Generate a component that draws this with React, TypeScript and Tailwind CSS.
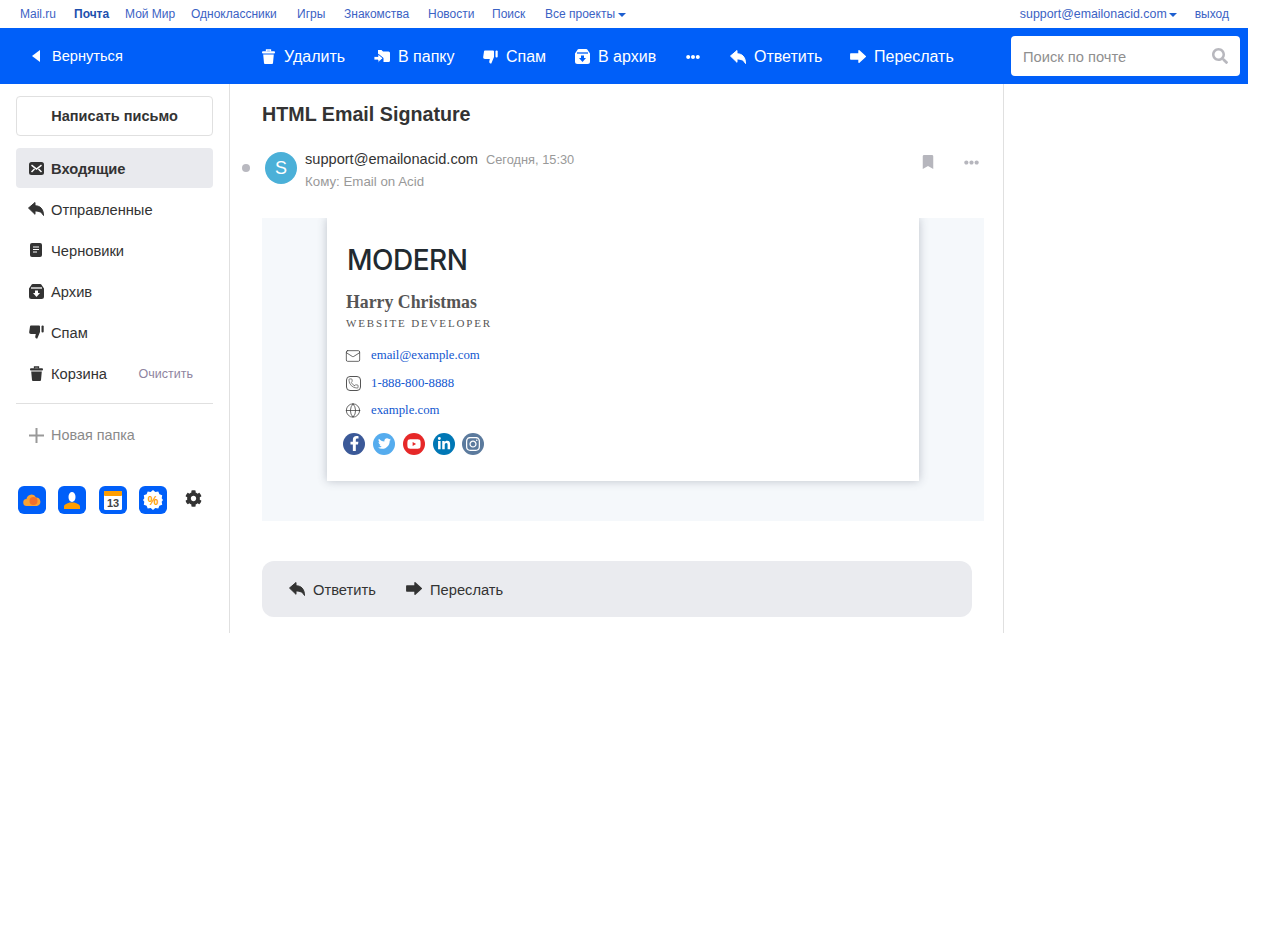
import React from "react";
import {
  FaBookmark,
  FaCog,
  FaEllipsisH,
  FaFacebookF,
  FaInstagram,
  FaLinkedinIn,
  FaSearch,
  FaTwitter,
  FaYoutube,
} from "react-icons/fa";
import { Globe, Mail, Phone } from "lucide-react";

const sans = "font-['Liberation_Sans',Arial,sans-serif]";
const serif = "font-['Liberation_Serif','Times_New_Roman',serif]";

function InboxIcon() {
  return (
    <svg width="15" height="13" viewBox="0 0 15 13">
      <rect width="15" height="13" rx="2.500" fill="#333" />
      <path d="M2.500 3.200 7.500 7 12.500 3.200M2.500 10 5.500 7M12.500 10 9.500 7" stroke="#fff" strokeWidth="1.500" fill="none" />
    </svg>
  );
}

function DraftIcon() {
  return (
    <svg width="12" height="14" viewBox="0 0 12 14">
      <rect width="12" height="14" rx="2" fill="#333" />
      <path d="M3 4h6M3 6.500h6M3 9h4" stroke="#fff" strokeWidth="1" />
    </svg>
  );
}

function ArchiveIcon({ color, hole }: { color: string; hole: string }) {
  return (
    <svg width="15" height="15" viewBox="0 0 15 15">
      <path d="M4 0h7a2 2 0 0 1 1.800 1.200L15 4.500v8A2.500 2.500 0 0 1 12.500 15h-10A2.500 2.500 0 0 1 0 12.500v-8l2.200-3.300A2 2 0 0 1 4 0z" fill={color} />
      <path d="M2 4h11" stroke={hole} strokeWidth="1.300" />
      <path d="M6 6.500h3v2.500h2l-3.500 4L4 9h2z" fill={hole} />
    </svg>
  );
}

function MoveIcon() {
  return (
    <svg width="16" height="14" viewBox="0 0 16 14">
      <path d="M4 0h3.500l1.500 1.500h5.500A1.500 1.500 0 0 1 16 3v7.500a1.500 1.500 0 0 1-1.500 1.500H9.500V8L5 4.500H4z" fill="#fff" />
      <path d="M0 6.500h4V4l5 4.200-5 4.300V10H0z" fill="#fff" stroke="#005ff9" strokeWidth="0.800" />
    </svg>
  );
}

function PlusIcon() {
  return (
    <svg width="15" height="15" viewBox="0 0 15 15">
      <path d="M7.500 0v15M0 7.500h15" stroke="#999" strokeWidth="2" />
    </svg>
  );
}

function TrashIcon({ color }: { color: string }) {
  return (
    <svg width="13" height="15" viewBox="0 0 13 15">
      <path d="M4.500 2.500V1h4v1.500" fill="none" stroke={color} strokeWidth="1.300" />
      <rect y="2.300" width="13" height="2.200" rx="1" fill={color} />
      <path d="M1.200 5.500h10.600l-.8 8.500a1 1 0 0 1-1 1H3a1 1 0 0 1-1-1z" fill={color} />
    </svg>
  );
}

function ReplyIcon({ color }: { color: string }) {
  return (
    <svg width="16" height="14" viewBox="0 0 16 14">
      <path
        d="M.5 6 7 .500v3.200c5 .1 8.500 3 8.500 9.800-1.500-3.300-4-4.500-8.500-4.600v3.400z"
        fill={color}
        stroke={color}
        strokeWidth="1"
        strokeLinejoin="round"
      />
    </svg>
  );
}

function ForwardIcon({ color }: { color: string }) {
  return (
    <svg width="16" height="13" viewBox="0 0 16 13">
      <path
        d="M15.300 6.500 9 .800v3.200H.8v5h8.200v3.200z"
        fill={color}
        stroke={color}
        strokeWidth="1.400"
        strokeLinejoin="round"
      />
    </svg>
  );
}

function SpamIcon({ color }: { color: string }) {
  return (
    <svg width="15" height="14" viewBox="0 0 15 14">
      <path d="M2 .5h8a1 1 0 0 1 1 1V7L8.300 13.500c-1.400 0-2.300-.9-2-2.300L6.800 9H2C.8 9 0 8.200.2 7L1 1.500A1 1 0 0 1 2 .5z" fill={color} />
      <rect x="12.500" y="0.500" width="2.200" height="7" rx="1" fill={color} />
    </svg>
  );
}

function TopBar() {
  const links = [
    { name: "Mail.ru", width: "w-[54px]" },
    { name: "Почта", width: "w-[51px]" },
    { name: "Мой Мир", width: "w-[66px]" },
    { name: "Одноклассники", width: "w-[106px]" },
    { name: "Игры", width: "w-[47px]" },
    { name: "Знакомства", width: "w-[84px]" },
    { name: "Новости", width: "w-[64px]" },
    { name: "Поиск", width: "w-[53px]" },
  ];
  return (
    <div className="flex h-7 w-[1248px] items-center pl-5 pr-[19px] text-xs text-[#3b62c4]">
      {links.map((link) => (
        <span key={link.name} className={`${link.width} ${link.name === "Почта" ? "font-bold text-[#1d4fae]" : ""}`}>
          {link.name}
        </span>
      ))}
      <span className="flex items-center gap-[3px]">
        Все проекты
        <span className="mt-px h-0 w-0 border-x-4 border-t-4 border-x-transparent border-t-[#1d5fd0]" />
      </span>
      <div className="ml-auto flex items-center">
        <span className="text-[12.400px]">support@emailonacid.com</span>
        <span className="ml-[2px] mt-px h-0 w-0 border-x-4 border-t-4 border-x-transparent border-t-[#1d5fd0]" />
        <span className="ml-[18px]">выход</span>
      </div>
    </div>
  );
}

function Toolbar() {
  return (
    <div className="flex h-14 w-[1248px] items-center bg-[#005ff9] pt-px text-base text-white">
      <div className="flex w-[262px] items-center pl-[32px]">
        <span className="h-0 w-0 border-y-[6px] border-r-[8px] border-y-transparent border-r-white" />
        <span className="ml-3 text-[14.600px]">Вернуться</span>
      </div>
      <div className="flex w-[749px] items-center">
        <span className="flex w-[112px] items-center gap-[9px]">
          <TrashIcon color="#fff" />
          Удалить
        </span>
        <span className="flex w-[109px] items-center gap-2">
          <MoveIcon />
          В папку
        </span>
        <span className="flex w-[92px] items-center gap-2">
          <SpamIcon color="#fff" />
          Спам
        </span>
        <span className="flex w-[111px] items-center gap-2">
          <ArchiveIcon color="#fff" hole="#005ff9" />
          В архив
        </span>
        <span className="flex w-[44px] items-center">
          <FaEllipsisH size={14} />
        </span>
        <span className="flex w-[120px] items-center gap-2">
          <ReplyIcon color="#fff" />
          Ответить
        </span>
        <span className="flex items-center gap-2">
          <ForwardIcon color="#fff" />
          Переслать
        </span>
      </div>
      <div className="-mt-px flex h-10 w-[229px] items-center justify-between rounded bg-white pl-3 pr-[12px] text-[14.700px]">
        <span className="pt-[2px] text-[#8f8f8f]">Поиск по почте</span>
        <FaSearch size={16} className="text-[#b8b8be]" />
      </div>
    </div>
  );
}

function SideItem({
  icon,
  label,
  active,
  extra,
}: {
  icon: React.ReactNode;
  label: string;
  active?: boolean;
  extra?: string;
}) {
  return (
    <div
      className={`flex h-10 items-center rounded pl-3 pr-5 text-[14.700px] text-[#333] ${active ? "bg-[#e9eaee] font-bold" : ""}`}
    >
      <span className="flex w-4 justify-center">{icon}</span>
      <span className="ml-[7px] pt-[2px]">{label}</span>
      {extra && <span className="ml-auto pt-[2px] text-[12.500px] text-[#8e84a0]">{extra}</span>}
    </div>
  );
}

function AppIcon({ children, className = "" }: { children: React.ReactNode; className?: string }) {
  return (
    <span className={`flex h-7 w-7 items-center justify-center rounded-md bg-[#005ff9] ${className}`}>{children}</span>
  );
}

function Sidebar() {
  return (
    <div className="w-[230px] shrink-0 border-r border-[#e0e0e0] pl-4 pr-4 pt-3">
      <div className="flex h-10 items-center justify-center rounded border border-[#e0e0e0] pt-[2px] text-[14.500px] font-bold text-[#333]">
        Написать письмо
      </div>
      <div className="mt-3 flex flex-col gap-px">
        <SideItem icon={<InboxIcon />} label="Входящие" active />
        <SideItem icon={<ReplyIcon color="#333" />} label="Отправленные" />
        <SideItem icon={<DraftIcon />} label="Черновики" />
        <SideItem icon={<ArchiveIcon color="#333" hole="#fff" />} label="Архив" />
        <SideItem icon={<SpamIcon color="#333" />} label="Спам" />
        <SideItem icon={<TrashIcon color="#333" />} label="Корзина" extra="Очистить" />
      </div>
      <div className="mt-[10px] border-t border-[#e0e0e0]" />
      <div className="mt-[11px] flex h-10 items-center pl-3 text-[14.400px] text-[#8a8a8a]">
        <span className="flex w-4 justify-center">
          <PlusIcon />
        </span>
        <span className="ml-[7px] pt-px">Новая папка</span>
      </div>
      <div className="mt-[31px] flex items-center gap-3 pl-[2px]">
        <AppIcon>
          <svg width="18" height="14" viewBox="0 0 18 14">
            <path d="M4 13a3.500 3.500 0 0 1-.5-7A5 5 0 0 1 13 4.500 4.300 4.300 0 0 1 14 13z" fill="#f9a233" />
            <circle cx="10.500" cy="8" r="4" fill="#f2702b" />
          </svg>
        </AppIcon>
        <AppIcon>
          <svg width="16" height="17" viewBox="0 0 16 17">
            <path d="M0 17v-2.500c0-2 3-3 5.500-4h5c2.500 1 5.500 2 5.500 4V17z" fill="#ff9e00" />
            <ellipse cx="8" cy="5" rx="3.500" ry="5" fill="#fff" />
          </svg>
        </AppIcon>
        <AppIcon className="ml-px">
          <svg width="18" height="19" viewBox="0 0 18 19">
            <rect width="18" height="19" rx="1.500" fill="#fff" />
            <rect width="18" height="5" rx="1" fill="#ff9e00" />
            <text x="9" y="16" textAnchor="middle" fontSize="11" fontWeight="700" fill="#444" fontFamily="Liberation Sans">
              13
            </text>
          </svg>
        </AppIcon>
        <AppIcon>
          <svg width="20" height="20" viewBox="0 0 20 20">
            <path
              d="M10 0l2.300 1.900 3-.5 1.100 2.800 2.800 1.100-.5 3L20 10l-1.300 1.700.5 3-2.800 1.100-1.100 2.800-3-.5L10 20l-2.300-1.900-3 .5-1.100-2.800-2.800-1.100.5-3L0 10l1.300-1.700-.5-3 2.800-1.100 1.100-2.800 3 .5z"
              fill="#fff"
            />
            <text x="10" y="14.500" textAnchor="middle" fontSize="12" fontWeight="700" fill="#ff9e00" fontFamily="Liberation Sans">
              %
            </text>
          </svg>
        </AppIcon>
        <FaCog size={17} color="#333" className="mb-[4px] ml-[6px]" />
      </div>
    </div>
  );
}

function SocialIcon({ bg, children }: { bg: string; children: React.ReactNode }) {
  return (
    <span className={`flex h-[22px] w-[22px] items-center justify-center rounded-full text-white ${bg}`}>
      {children}
    </span>
  );
}

function Contact({ icon, text }: { icon: React.ReactNode; text: string }) {
  return (
    <div className="flex h-[27.500px] items-center">
      <span className="flex w-4 justify-center text-[#333]">{icon}</span>
      <span className="ml-[10px] text-[12.800px] text-[#1257cf]">{text}</span>
    </div>
  );
}

function Signature() {
  return (
    <div className="h-[303px] overflow-hidden bg-[#f5f8fb] pl-[65px]">
      <div className={`h-[263px] w-[592px] bg-white pl-[19px] shadow-[0_0_9px_rgba(60,70,90,0.3)] ${serif}`}>
        <div className="ml-px pt-6 font-['Inter',sans-serif] text-[28px] font-medium leading-[36px] tracking-[-0.5px] text-[#222a30]">
          MODERN
        </div>
        <div className="mt-[13px] text-[17.800px] font-bold leading-[22px] text-[#555]">Harry Christmas</div>
        <div className="mt-[2px] text-[11px] leading-4 tracking-[1.85px] text-[#555]">WEBSITE DEVELOPER</div>
        <div className="-ml-px mt-[11px]">
          <Contact icon={<Mail size={18} strokeWidth={1.1} />} text="email@example.com" />
          <Contact
            icon={
              <span className="flex h-[15px] w-[15px] items-center justify-center rounded-sm border border-[#555]">
                <Phone size={11} strokeWidth={1.300} />
              </span>
            }
            text="1-888-800-8888"
          />
          <Contact icon={<Globe size={17} strokeWidth={1.100} />} text="example.com" />
        </div>
        <div className="-ml-[3px] mt-2 flex gap-2">
          <SocialIcon bg="bg-[#3b5998]">
            <FaFacebookF size={15} />
          </SocialIcon>
          <SocialIcon bg="bg-[#55acee]">
            <FaTwitter size={13} />
          </SocialIcon>
          <SocialIcon bg="bg-[#e62828]">
            <FaYoutube size={14} />
          </SocialIcon>
          <SocialIcon bg="bg-[#0077b5]">
            <FaLinkedinIn size={14} />
          </SocialIcon>
          <div className="-ml-px">
            <SocialIcon bg="bg-[#5b7a9d]">
              <FaInstagram size={16} />
            </SocialIcon>
          </div>
        </div>
      </div>
    </div>
  );
}

function Letter() {
  return (
    <div className="w-[774px] shrink-0 border-r border-[#e0e0e0] pl-8 pr-[19px] pt-[18px]">
      <h1 className="text-[19.700px] font-bold leading-6 text-[#333]">HTML Email Signature</h1>
      <div className="-ml-5 mt-[26px] flex h-8 items-center pr-[5px]">
        <span className="h-2 w-2 rounded-full bg-[#b9b9c0]" />
        <span className="ml-[15px] flex h-8 w-8 items-center justify-center rounded-full bg-[#4bb0d8] text-lg text-white">
          S
        </span>
        <div className="ml-2 flex flex-col pt-[2px]">
          <div className="flex items-baseline leading-[18px]">
            <span className="text-[14.600px] text-[#333]">support@emailonacid.com</span>
            <span className="ml-2 text-[12.800px] text-[#999]">Сегодня, 15:30</span>
          </div>
          <span className="mt-[6px] text-[13.300px] leading-[14px] text-[#999]">Кому: Email on Acid</span>
        </div>
        <div className="-mt-3 ml-auto flex items-center gap-[29px]">
          <FaBookmark size={14} color="#b6b6bd" />
          <FaEllipsisH size={15} color="#b6b6bd" />
        </div>
      </div>
      <div className="mt-[34px]">
        <Signature />
      </div>
      <div className="mt-10 flex h-14 w-[710px] items-center rounded-xl bg-[#eaebef] pl-[27px] text-[14.700px] text-[#333]">
        <span className="flex w-[117px] items-center gap-2">
          <ReplyIcon color="#333" />
          <span className="pt-[2px]">Ответить</span>
        </span>
        <span className="flex items-center gap-2">
          <ForwardIcon color="#333" />
          <span className="pt-[2px]">Переслать</span>
        </span>
      </div>
    </div>
  );
}

export default function App() {
  return (
    <div className={`min-h-[950px] bg-white ${sans}`}>
      <TopBar />
      <Toolbar />
      <div className="flex h-[549px] w-[1248px]">
        <Sidebar />
        <Letter />
      </div>
    </div>
  );
}
